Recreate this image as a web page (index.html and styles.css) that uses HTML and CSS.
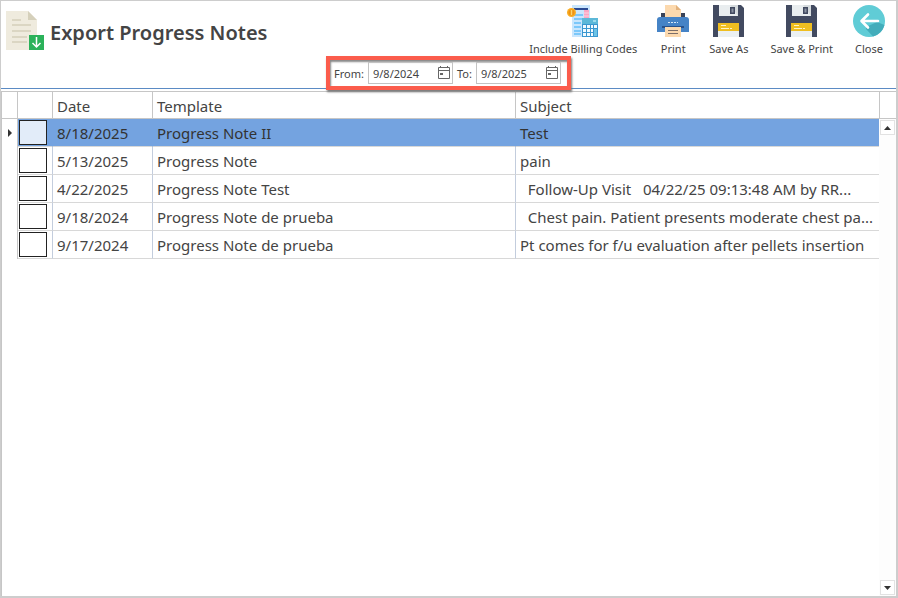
FILE: index.html
```html
<!DOCTYPE html>
<html lang="en">
  <head>
    <meta charset="utf-8">
    <title>Export Progress Notes</title>
    <link rel="stylesheet" href="styles.css">
  </head>
  <body>
    <div class="window">
      <header class="header">
        <div class="top-row">
          <svg class="title-icon" width="38" height="39" viewBox="0 0 38 39">
            <path d="M0 0H22L31 9V39H0z" fill="#efebde"/>
            <path d="M22 0L31 9H22z" fill="#d5d0bb"/>
            <path d="M6 9h9M6 14h19M6 20h19M6 26h15M6 31h15" stroke="#d5d0bb" stroke-width="1.4"/>
            <path d="M23 24h15v15H23z" fill="#2bb25a"/>
            <path d="M30.500 26v10M26.500 32l4 4 4-4" fill="none" stroke="#fff" stroke-width="1.500"/>
          </svg>
          <h1>Export Progress Notes</h1>
          <div class="toolbar">
            <button type="button" class="tool">
              <svg width="32" height="33" viewBox="0 0 32 33">
                <path d="M5 0H23V32H5z" fill="#c9e6fd"/>
                <path d="M7 3h14v2H7z" fill="#2a4a94"/>
                <path d="M17 5h5v9h-5z" fill="#fba6c4"/>
                <path d="M17 8h5M17 11h5" stroke="#fdd3e2"/>
                <path d="M7 10h9M7 14h8M7 18h7M7 22h7M7 26h7M7 29h7" stroke="#7cc8fa" stroke-width="2"/>
                <circle cx="4.500" cy="7.500" r="4.500" fill="#f9ae25"/>
                <circle cx="4.500" cy="7.500" r="3" fill="#ee9412"/>
                <path d="M4.500 5v5" stroke="#fbd36b" stroke-width="1.400"/>
                <path d="M15 13H31V32H15z" fill="#3a97d0"/>
                <path d="M15 13H31V19H15z" fill="#5cb8d8"/>
                <path d="M26 15h3v2h-3z" fill="#9bdcee"/>
                <path d="M16 20h3v3h-3zM20 20h3v3h-3zM24 20h2v3h-2zM27 20h3v3h-3zM16 24h3v3h-3zM20 24h3v3h-3zM24 24h2v3h-2zM16 28h3v3h-3zM20 28h3v3h-3zM24 28h2v3h-2z" fill="#f3fbff"/>
                <path d="M27 24h3v7h-3z" fill="#6cc3e6"/>
              </svg>
              <span>Include Billing Codes</span>
            </button>
            <button type="button" class="tool">
              <svg width="32" height="33" viewBox="0 0 32 33">
                <path d="M4 8h24v5H4z" fill="#3a4358"/>
                <path d="M8 0H19L24 5V13H8z" fill="#fcd9ae"/>
                <path d="M19 0L24 5H19z" fill="#e3b27c"/>
                <path d="M3 12h26q3 0 3 3v12H0V15q0-3 3-3z" fill="#4583c6"/>
                <path d="M11 17.500h10" stroke="#d7e8f8" stroke-width="1" stroke-dasharray="2 1"/>
                <path d="M5 21h22v2H5z" fill="#28518a"/>
                <path d="M8 22h16v10H8z" fill="#fcd9ae"/>
                <path d="M11 25.500h10M11 28.500h10" stroke="#7b6d68" stroke-width="1"/>
              </svg>
              <span>Print</span>
            </button>
            <button type="button" class="tool">
              <svg width="32" height="33" viewBox="0 0 32 33">
                <path d="M0 0H28L31 3V32H0z" fill="#424a60"/>
                <path d="M6 0H25V11H6z" fill="#d5dadd"/>
                <path d="M6 0H17L25 11H6z" fill="#e9edef"/>
                <path d="M17 2H22V9H17z" fill="#424a60"/>
                <path d="M18.500 3.500H20.500V7.500H18.500z" fill="#8b93a2"/>
                <path d="M5 18H26V32H5z" fill="#ebf0f2"/>
                <path d="M5 18H26V26H5z" fill="#efbe20"/>
                <path d="M8 20.500h5M8 23.500h8M17 23.500h2" stroke="#fff4c6" stroke-width="1"/>
              </svg>
              <span>Save As</span>
            </button>
            <button type="button" class="tool">
              <svg width="32" height="33" viewBox="0 0 32 33">
                <path d="M0 0H28L31 3V32H0z" fill="#424a60"/>
                <path d="M6 0H25V11H6z" fill="#d5dadd"/>
                <path d="M6 0H17L25 11H6z" fill="#e9edef"/>
                <path d="M17 2H22V9H17z" fill="#424a60"/>
                <path d="M18.500 3.500H20.500V7.500H18.500z" fill="#8b93a2"/>
                <path d="M5 18H26V32H5z" fill="#ebf0f2"/>
                <path d="M5 18H26V26H5z" fill="#efbe20"/>
                <path d="M8 20.500h5M8 23.500h8M17 23.500h2" stroke="#fff4c6" stroke-width="1"/>
              </svg>
              <span>Save &amp; Print</span>
            </button>
            <button type="button" class="tool">
              <svg width="32" height="33" viewBox="0 0 32 33">
                <circle cx="16" cy="16" r="16" fill="#60ccd6"/>
                <path d="M13 22L24 17L31.500 20A16 16 0 0 1 20 31.500L13 24z" fill="#42adbb"/>
                <path d="M25 16H9M15 9.500L8.500 16L15 22.500" fill="none" stroke="#fff" stroke-width="2.600" stroke-linecap="round" stroke-linejoin="round"/>
              </svg>
              <span>Close</span>
            </button>
          </div>
        </div>

        <div class="filter">
          <label for="from">From:</label>
          <div class="date-box">
            <input id="from" type="text" value="9/8/2024">
            <button type="button" aria-label="Choose start date">
              <svg width="14" height="14" viewBox="0 0 14 14"><path d="M1.500 1.500h11v11h-11zM1.500 4.500h11M3.500 0v2M10.500 0v2" fill="none" stroke="#666"/><path d="M3 7h3v2H3z" fill="#666"/></svg>
            </button>
          </div>
          <label for="to">To:</label>
          <div class="date-box">
            <input id="to" type="text" value="9/8/2025">
            <button type="button" aria-label="Choose end date">
              <svg width="14" height="14" viewBox="0 0 14 14"><path d="M1.500 1.500h11v11h-11zM1.500 4.500h11M3.500 0v2M10.500 0v2" fill="none" stroke="#666"/><path d="M3 7h3v2H3z" fill="#666"/></svg>
            </button>
          </div>
        </div>
      </header>

      <main class="grid">
        <div class="table-wrap">
          <table>
            <colgroup>
              <col class="col-marker">
              <col class="col-check">
              <col class="col-date">
              <col class="col-template">
              <col>
            </colgroup>
            <thead>
              <tr>
                <th></th>
                <th></th>
                <th>Date</th>
                <th>Template</th>
                <th>Subject</th>
              </tr>
            </thead>
            <tbody>
              <tr class="selected">
                <td class="marker"><svg width="4" height="8" viewBox="0 0 4 8"><path d="M0 0L4 4L0 8z" fill="#333"/></svg></td>
                <td class="check"><input type="checkbox" aria-label="Select 8/18/2025"></td>
                <td>8/18/2025</td>
                <td>Progress Note II</td>
                <td>Test</td>
              </tr>
              <tr>
                <td class="marker"></td>
                <td class="check"><input type="checkbox" aria-label="Select 5/13/2025"></td>
                <td>5/13/2025</td>
                <td>Progress Note</td>
                <td>pain</td>
              </tr>
              <tr>
                <td class="marker"></td>
                <td class="check"><input type="checkbox" aria-label="Select 4/22/2025"></td>
                <td>4/22/2025</td>
                <td>Progress Note Test</td>
                <td>  Follow-Up Visit   04/22/25 09:13:48 AM by RR...</td>
              </tr>
              <tr>
                <td class="marker"></td>
                <td class="check"><input type="checkbox" aria-label="Select 9/18/2024"></td>
                <td>9/18/2024</td>
                <td>Progress Note de prueba</td>
                <td>  Chest pain. Patient presents moderate chest pa...</td>
              </tr>
              <tr>
                <td class="marker"></td>
                <td class="check"><input type="checkbox" aria-label="Select 9/17/2024"></td>
                <td>9/17/2024</td>
                <td>Progress Note de prueba</td>
                <td>Pt comes for f/u evaluation after pellets insertion</td>
              </tr>
            </tbody>
          </table>
        </div>
        <div class="side">
          <div class="side-head"></div>
          <div class="scrollbar">
            <button type="button" aria-label="Scroll up"><svg width="7" height="4" viewBox="0 0 7 4"><path d="M0 4L3.500 0L7 4z" fill="#333"/></svg></button>
            <button type="button" aria-label="Scroll down"><svg width="7" height="4" viewBox="0 0 7 4"><path d="M0 0L3.500 4L7 0z" fill="#333"/></svg></button>
          </div>
        </div>
      </main>
    </div>
  </body>
</html>
```
FILE: styles.css
```css
* {
  box-sizing: border-box;
}

body {
  margin: 0;
  background: #fff;
  color: #444;
  font-family: "Noto Sans", "Open Sans", sans-serif;
  font-size: 15px;
}

button, input {
  font: inherit;
  color: inherit;
}

button {
  padding: 0;
  border: none;
  background: none;
}

svg {
  display: block;
}

.window {
  display: flex;
  flex-direction: column;
  height: 100vh;
  border: 1px solid #cdcdcd;
  border-bottom-width: 2px;
  border-right-width: 2px;
}

.header {
  border-bottom: 1px solid #5b8bc4;
}

.top-row {
  display: flex;
  align-items: flex-start;
  height: 55px;
  padding: 4px 13px 0 5px;
}

.title-icon {
  margin-top: 6px;
}

h1 {
  flex: 1;
  margin: 14px 0 0 6px;
  font-size: 20px;
  line-height: 28px;
  font-weight: 600;
  white-space: nowrap;
}

.toolbar {
  display: flex;
  gap: 22px;
}

.tool {
  display: flex;
  flex-direction: column;
  align-items: center;
  gap: 3px;
  font-size: 11px;
  line-height: 16px;
  white-space: nowrap;
}

.tool svg {
  margin: 0 -2px;
}

.filter {
  position: relative;
  display: flex;
  align-items: center;
  width: max-content;
  height: 34px;
  margin: 0 auto -2px;
  padding-right: 6px;
  border: 4px solid #fb5c4c;
  background: #fff;
  box-shadow: 1px 2px 2px #777, inset 1px 2px 2px #888;
  font-size: 11px;
}

.filter label {
  padding: 0 4px;
}

.date-box {
  display: flex;
  align-items: center;
  width: 85px;
  height: 22px;
  padding: 0 1px 0 4px;
  border: 1px solid #c3c3c3;
}

.date-box input {
  flex: 1;
  min-width: 0;
  padding: 0;
  border: none;
  outline: none;
  background: none;
}

.grid {
  flex: 1;
  display: flex;
  min-height: 0;
  margin-top: 2px;
  border-top: 1px solid #c6c6c6;
  border-left: 1px solid #c6c6c6;
}

.table-wrap {
  flex: 1;
  min-width: 0;
}

table {
  width: 100%;
  table-layout: fixed;
  border-collapse: separate;
  border-spacing: 0;
}

.col-marker {
  width: 16px;
}

.col-check {
  width: 35px;
}

.col-date {
  width: 100px;
}

.col-template {
  width: 363px;
}

th, td {
  height: 28px;
  padding: 0 4px;
  border-right: 1px solid #c3cddd;
  border-bottom: 1px solid #d8d8d8;
  text-align: left;
  font-weight: 400;
  line-height: 20px;
  white-space: pre;
  overflow: hidden;
}

th {
  height: 27px;
  padding-top: 2px;
  border-color: #c6c6c6;
}

th:last-child, td:last-child {
  border-right: none;
}

td.marker {
  padding: 0 0 0 6px;
  border-bottom: none;
  border-right-color: #c6c6c6;
}

td.check {
  padding: 0 0 0 1px;
}

.check input {
  display: block;
  width: 28px;
  height: 25px;
  margin: 0;
  appearance: none;
  border: 1px solid #222;
  background: #fff;
}

.selected td:not(.marker) {
  border-right-color: #74a3e0;
  background: #74a3e0;
  color: #333;
}

.selected .check input {
  background: #e2ecf9;
}

.side {
  display: flex;
  flex-direction: column;
  width: 17px;
}

.side-head {
  height: 27px;
  border-left: 1px solid #c6c6c6;
  border-bottom: 1px solid #c6c6c6;
}

.scrollbar {
  flex: 1;
  display: flex;
  flex-direction: column;
  justify-content: space-between;
  padding: 1px 0;
  background: #fdfdfd;
}

.scrollbar button {
  display: flex;
  align-items: center;
  justify-content: center;
  width: 15px;
  height: 15px;
  margin-left: 1px;
  border: 1px solid #e2e2e2;
  background: #fff;
}
```
